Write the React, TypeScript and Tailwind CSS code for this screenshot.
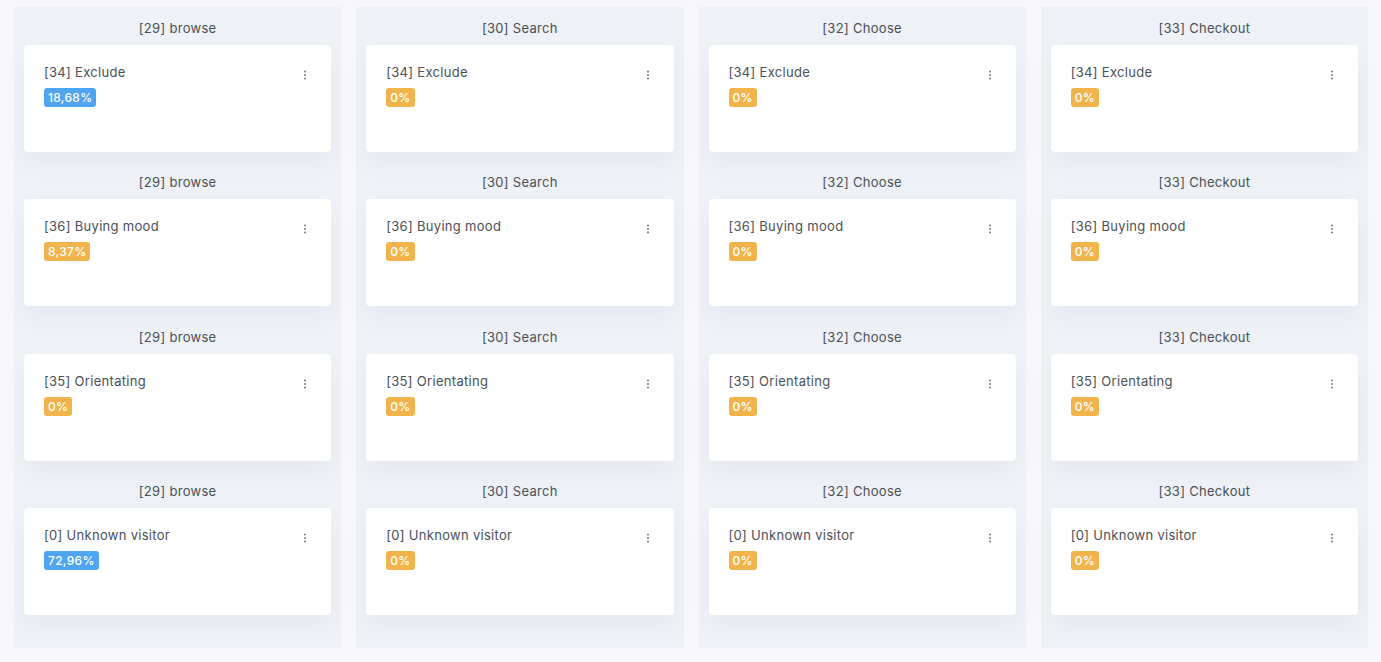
import React from "react";

type Item = { title: string; value: string; blue: boolean };

const columns: { name: string; items: Item[] }[] = [
  {
    name: "[29] browse",
    items: [
      { title: "[34] Exclude", value: "18,68%", blue: true },
      { title: "[36] Buying mood", value: "8,37%", blue: false },
      { title: "[35] Orientating", value: "0%", blue: false },
      { title: "[0] Unknown visitor", value: "72,96%", blue: true },
    ],
  },
  {
    name: "[30] Search",
    items: [
      { title: "[34] Exclude", value: "0%", blue: false },
      { title: "[36] Buying mood", value: "0%", blue: false },
      { title: "[35] Orientating", value: "0%", blue: false },
      { title: "[0] Unknown visitor", value: "0%", blue: false },
    ],
  },
  {
    name: "[32] Choose",
    items: [
      { title: "[34] Exclude", value: "0%", blue: false },
      { title: "[36] Buying mood", value: "0%", blue: false },
      { title: "[35] Orientating", value: "0%", blue: false },
      { title: "[0] Unknown visitor", value: "0%", blue: false },
    ],
  },
  {
    name: "[33] Checkout",
    items: [
      { title: "[34] Exclude", value: "0%", blue: false },
      { title: "[36] Buying mood", value: "0%", blue: false },
      { title: "[35] Orientating", value: "0%", blue: false },
      { title: "[0] Unknown visitor", value: "0%", blue: false },
    ],
  },
];

function Kebab() {
  return (
    <svg width="4" height="10" viewBox="0 0 4 10" className="block">
      <circle cx="2" cy="1.5" r="1" fill="#74788d" />
      <circle cx="2" cy="5" r="1" fill="#74788d" />
      <circle cx="2" cy="8.5" r="1" fill="#74788d" />
    </svg>
  );
}

export default function App() {
  return (
    <div
      className="w-[1381px] h-[662px] bg-[#f8f8fb] overflow-hidden text-[#495057]"
      style={{ fontFamily: "Inter, 'Open Sans', sans-serif" }}
    >
      <div className="grid grid-cols-4 gap-[15px] pl-[14px] pr-[13px] pt-[7px]">
        {columns.map((col) => (
          <div key={col.name} className="bg-[#eef1f6] h-[641px] px-[10px]">
            {col.items.map((it) => (
              <div key={it.title} className="pt-[13px] pb-[9.33px]">
                <div className="text-[13px] leading-[17px] tracking-[0.3px] text-center mb-[8px]">{col.name}</div>
                <div className="bg-white rounded-[4px] h-[107px] shadow-[0_12px_24px_rgba(18,38,63,0.04)] pl-[20px] pr-[24px] pt-[19px] flex justify-between">
                  <div className="flex flex-col items-start">
                    <div className="text-[13px] leading-[16px] tracking-[0.3px]">{it.title}</div>
                    <span
                      className={
                        "mt-[8px] inline-block rounded-[3px] px-[4px] h-[19px] leading-[19px] text-[12px] font-medium tracking-[0.3px] text-white " +
                        (it.blue ? "bg-[#50a5f1]" : "bg-[#f1b44c]")
                      }
                    >
                      {it.value}
                    </span>
                  </div>
                  <div className="pt-[6px]">
                    <Kebab />
                  </div>
                </div>
              </div>
            ))}
          </div>
        ))}
      </div>
    </div>
  );
}
